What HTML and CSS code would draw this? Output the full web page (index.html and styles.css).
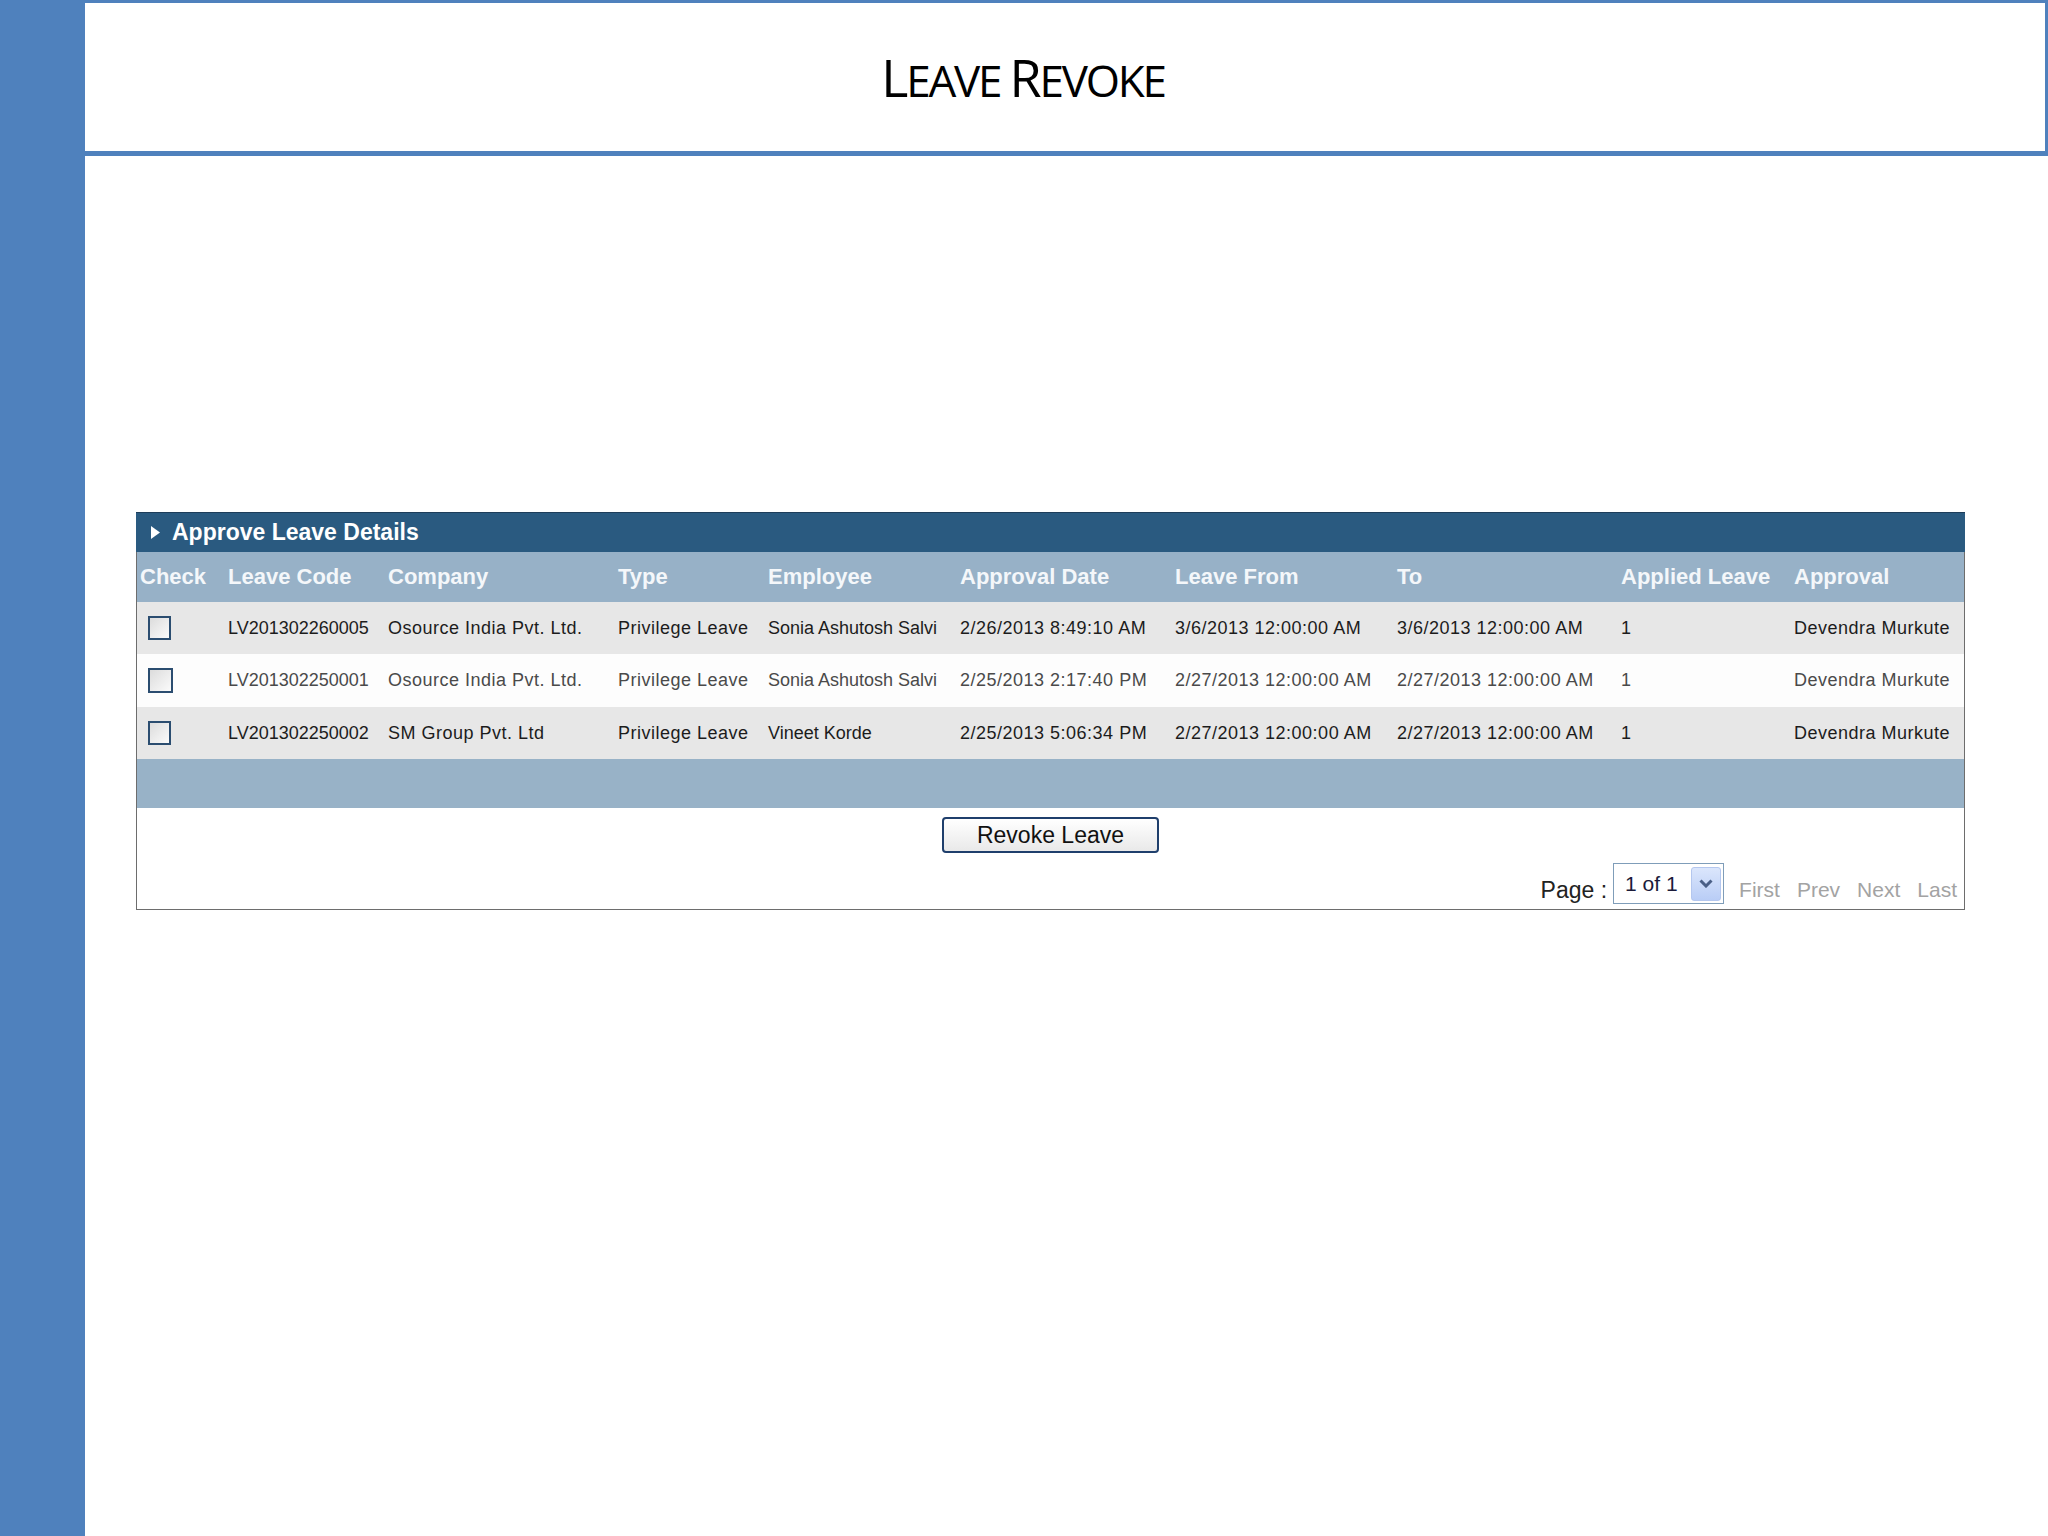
FILE: index.html
```html
<!DOCTYPE html>
<html lang="en">
<head>
<meta charset="UTF-8">
<title>Leave Revoke</title>
<link rel="stylesheet" href="styles.css">
</head>
<body>

<div class="slide">
    <div class="side-bar"></div>
    <div class="main">
        <div class="title-box">
            <h1 class="title"><span class="cap">L</span>EAVE <span class="cap">R</span>EVOKE</h1>
        </div>

        <div class="panel">
            <div class="panel-title">
                <svg class="arrow" width="9" height="13" viewBox="0 0 9 13"><path d="M0 0 L9 6.5 L0 13 Z" fill="#fff"/></svg>
                Approve Leave Details
            </div>
            <table class="grid">
                <colgroup>
                    <col style="width:88px">
                    <col style="width:160px">
                    <col style="width:230px">
                    <col style="width:150px">
                    <col style="width:192px">
                    <col style="width:215px">
                    <col style="width:222px">
                    <col style="width:224px">
                    <col style="width:173px">
                    <col style="width:173px">
                </colgroup>
                <thead>
                    <tr>
                        <th>Check</th>
                        <th>Leave Code</th>
                        <th>Company</th>
                        <th>Type</th>
                        <th>Employee</th>
                        <th>Approval Date</th>
                        <th>Leave From</th>
                        <th>To</th>
                        <th>Applied Leave</th>
                        <th>Approval</th>
                    </tr>
                </thead>
                <tbody>
                    <tr class="row-gray">
                        <td class="chk-cell"><span class="chk"></span></td>
                        <td class="code">LV201302260005</td>
                        <td>Osource India Pvt. Ltd.</td>
                        <td>Privilege Leave</td>
                        <td class="name">Sonia Ashutosh Salvi</td>
                        <td>2/26/2013 8:49:10 AM</td>
                        <td>3/6/2013 12:00:00 AM</td>
                        <td>3/6/2013 12:00:00 AM</td>
                        <td>1</td>
                        <td>Devendra Murkute</td>
                    </tr>
                    <tr class="row-white">
                        <td class="chk-cell"><span class="chk big"></span></td>
                        <td class="code">LV201302250001</td>
                        <td>Osource India Pvt. Ltd.</td>
                        <td>Privilege Leave</td>
                        <td class="name">Sonia Ashutosh Salvi</td>
                        <td>2/25/2013 2:17:40 PM</td>
                        <td>2/27/2013 12:00:00 AM</td>
                        <td>2/27/2013 12:00:00 AM</td>
                        <td>1</td>
                        <td>Devendra Murkute</td>
                    </tr>
                    <tr class="row-gray">
                        <td class="chk-cell"><span class="chk"></span></td>
                        <td class="code">LV201302250002</td>
                        <td>SM Group Pvt. Ltd</td>
                        <td>Privilege Leave</td>
                        <td class="name">Vineet Korde</td>
                        <td>2/25/2013 5:06:34 PM</td>
                        <td>2/27/2013 12:00:00 AM</td>
                        <td>2/27/2013 12:00:00 AM</td>
                        <td>1</td>
                        <td>Devendra Murkute</td>
                    </tr>
                </tbody>
            </table>
            <div class="grid-foot"></div>

            <div class="actions">
                <button class="revoke-button">Revoke Leave</button>
            </div>

            <div class="pager">
                <span class="pager-label">Page :</span>
                <div class="page-select">
                    <span class="page-value">1 of 1</span>
                    <span class="drop-btn">
                        <svg width="14" height="9" viewBox="0 0 14 9"><path d="M1.5 1.5 L7 7 L12.5 1.5" fill="none" stroke="#4a5f86" stroke-width="3"/></svg>
                    </span>
                </div>
                <a class="pager-link">First</a>
                <a class="pager-link">Prev</a>
                <a class="pager-link">Next</a>
                <a class="pager-link">Last</a>
            </div>
        </div>
    </div>
</div>

</body>
</html>
```

FILE: styles.css
```css
body {
    margin: 0;
    padding: 0;
    background-color: #fff;
    font-family: "Liberation Sans", Arial, sans-serif;
}
.slide {
    display: flex;
    width: 2048px;
    height: 1536px;
}
.side-bar {
    width: 85px;
    background-color: #4f81bd;
    flex-shrink: 0;
}
.main {
    flex: 1;
}
.title-box {
    box-sizing: border-box;
    height: 156px;
    border-top: 3px solid #4f81bd;
    border-right: 3px solid #4f81bd;
    border-bottom: 5px solid #4f81bd;
    padding-top: 44px;
    padding-right: 84px;
    text-align: center;
}
.title {
    margin: 0;
    font-family: "Open Sans", sans-serif;
    font-weight: normal;
    font-size: 44px;
    line-height: 60px;
    letter-spacing: -2.2px;
    color: #000;
}
.title .cap {
    font-size: 52px;
}
.panel {
    box-sizing: border-box;
    width: 1829px;
    margin-top: 356px;
    margin-left: 51px;
    border: 1px solid #6d6d6d;
    border-top: none;
}
.panel-title {
    height: 40px;
    margin: 0 -1px;
    padding-left: 15px;
    display: flex;
    align-items: center;
    gap: 12px;
    background-color: #2a5a80;
    border-top: 1px solid #1d3d5a;
    box-sizing: border-box;
    color: #fff;
    font-weight: bold;
    font-size: 23px;
}
.grid {
    width: 100%;
    border-collapse: collapse;
    table-layout: fixed;
}
.grid th {
    height: 50px;
    padding: 0 0 0 3px;
    background-color: #97b1c7;
    color: #f4f7fa;
    font-size: 22px;
    font-weight: bold;
    text-align: left;
    white-space: nowrap;
}
.grid td {
    height: 52px;
    padding: 0 0 0 3px;
    font-size: 18px;
    letter-spacing: 0.5px;
    color: #1c1c1c;
    white-space: nowrap;
}
.grid td.code,
.grid td.name {
    letter-spacing: 0;
}
.row-gray td {
    background-color: #e7e7e7;
}
.row-white td {
    background-color: #fdfdfd;
    color: #4a4a4a;
    height: 53px;
}
.grid td.chk-cell {
    padding-left: 11px;
}
.chk {
    display: block;
    box-sizing: border-box;
    width: 23px;
    height: 24px;
    border: 2px solid #2b4d70;
    background: linear-gradient(135deg, #dcdcdc, #fbfbfb);
}
.chk.big {
    width: 25px;
    height: 25px;
}
.grid-foot {
    height: 49px;
    background-color: #98b2c7;
}
.actions {
    padding-top: 9px;
    text-align: center;
}
.revoke-button {
    width: 217px;
    height: 36px;
    border: 2px solid #1f3f6c;
    border-radius: 4px;
    background: linear-gradient(#ffffff, #e9e9e9);
    font-family: "Liberation Sans", Arial, sans-serif;
    font-size: 23px;
    color: #111;
    padding: 0;
    cursor: pointer;
}
.pager {
    margin-top: 10px;
    padding: 0 7px 5px 0;
    display: flex;
    justify-content: flex-end;
    align-items: flex-end;
}
.pager-label {
    font-size: 23px;
    line-height: 24px;
    margin: 0 6px 2px 0;
    color: #222;
}
.page-select {
    box-sizing: border-box;
    width: 111px;
    height: 41px;
    border: 1px solid #7f9db9;
    display: flex;
    align-items: center;
    justify-content: space-between;
    padding: 0 2px 0 11px;
    margin-right: 15px;
}
.page-value {
    font-size: 21px;
    color: #1b1b3a;
}
.drop-btn {
    box-sizing: border-box;
    width: 30px;
    height: 34px;
    border: 1px solid #b4c7ef;
    border-radius: 3px;
    background: linear-gradient(#dbe6fc, #b9cdf6);
    display: flex;
    align-items: center;
    justify-content: center;
}
.pager-link {
    font-size: 21px;
    line-height: 24px;
    margin: 0 0 2px 17px;
    color: #a3a3a3;
}
.pager-link:first-of-type {
    margin-left: 0;
}
```
